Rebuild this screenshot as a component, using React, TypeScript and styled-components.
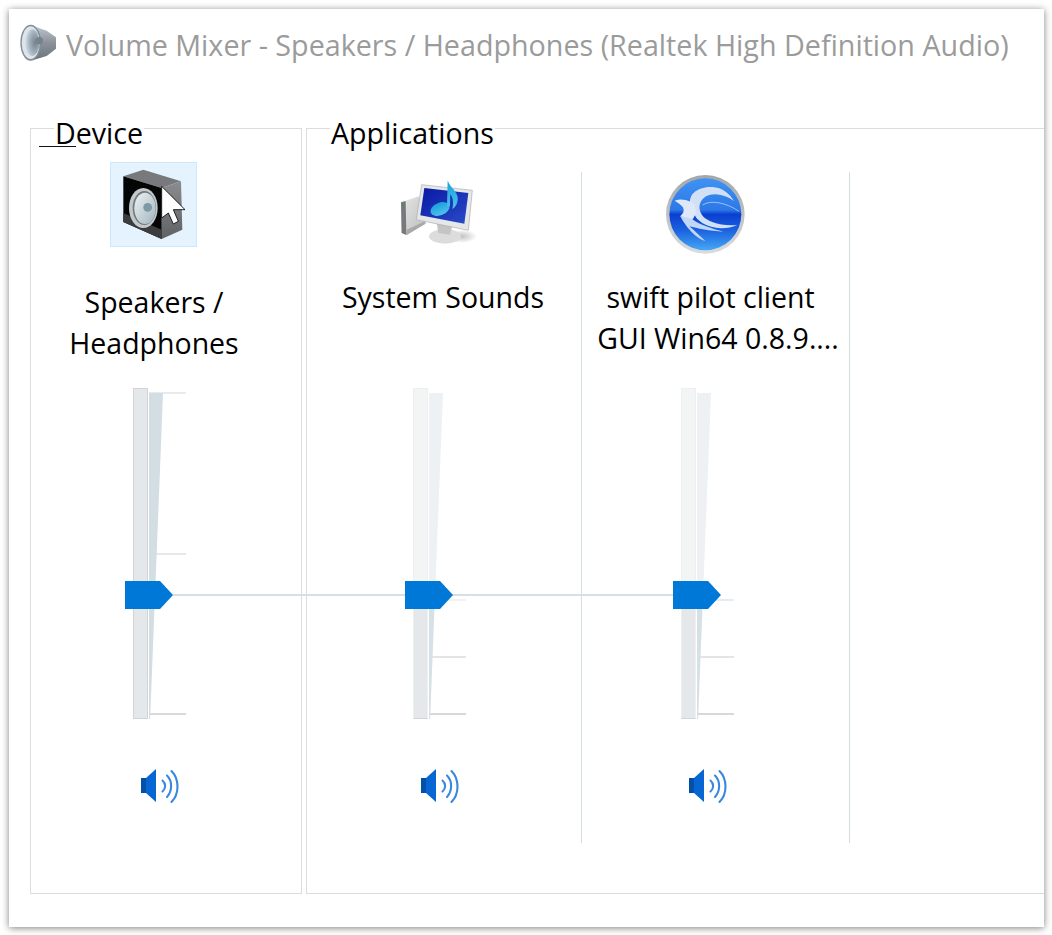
import React from 'react';
import styled, { createGlobalStyle } from 'styled-components';

const GlobalStyle = createGlobalStyle`
  html, body {
    margin: 0;
    padding: 0;
    background: #fff;
  }
  body {
    font-family: 'Open Sans', 'Liberation Sans', sans-serif;
  }
`;

function TitleSpeakerIcon() {
  return (
    <svg width="37" height="38" viewBox="60 72 111 114">
      <defs>
        <linearGradient id="ts-back" x1="0" y1="0" x2="0" y2="1">
          <stop offset="0" stopColor="#c0c5cb" />
          <stop offset="0.5" stopColor="#8b929a" />
          <stop offset="1" stopColor="#6d7379" />
        </linearGradient>
        <radialGradient id="ts-cone" cx="0.7" cy="0.5" r="0.75">
          <stop offset="0" stopColor="#76838e" />
          <stop offset="0.55" stopColor="#a5b3be" />
          <stop offset="1" stopColor="#dbe3e9" />
        </radialGradient>
      </defs>
      <polygon points="100,78 140,92 168,112 168,146 140,168 100,180" fill="url(#ts-back)" />
      <ellipse cx="92" cy="128" rx="31" ry="54" fill="#7f8d9b" />
      <ellipse cx="92" cy="128" rx="27" ry="49" fill="#dde5ea" />
      <ellipse cx="97" cy="128" rx="21" ry="40" fill="url(#ts-cone)" />
      <circle cx="118" cy="122" r="11" fill="#748390" />
    </svg>
  );
}

function DeviceIcon() {
  return (
    <svg width="85" height="83" viewBox="18 15 255 249">
      <defs>
        <linearGradient id="dv-side" x1="0" y1="0" x2="0" y2="1">
          <stop offset="0" stopColor="#8a8c90" />
          <stop offset="1" stopColor="#5f6165" />
        </linearGradient>
        <linearGradient id="dv-cone" x1="0" y1="0" x2="1" y2="1">
          <stop offset="0" stopColor="#eef2f3" />
          <stop offset="1" stopColor="#a3b5bf" />
        </linearGradient>
      </defs>
      <polygon points="55,55 115,35 228,70 170,90" fill="#77797d" />
      <polygon points="170,90 228,70 232,215 170,243" fill="url(#dv-side)" />
      <polygon points="55,55 170,90 170,243 55,192" fill="#050505" />
      <polygon points="55,165 170,215 170,243 55,192" fill="#3b3c3e" />
      <ellipse cx="115" cy="150" rx="43" ry="60" fill="#c3c8ca" />
      <ellipse cx="118" cy="150" rx="35" ry="51" fill="#6f7a80" />
      <ellipse cx="120" cy="151" rx="32" ry="47" fill="url(#dv-cone)" />
      <circle cx="128" cy="148" r="13" fill="#7f98a5" />
      <polygon
        points="170,85 240,155 205,155 220,190 205,198 190,165 170,180"
        fill="#fff"
        stroke="#000"
        strokeWidth="2.5"
      />
    </svg>
  );
}

function SystemSoundsIcon() {
  return (
    <svg width="78" height="68" viewBox="15 24 234 204">
      <defs>
        <linearGradient id="ss-screen" x1="0" y1="0" x2="1" y2="1">
          <stop offset="0" stopColor="#0a18a4" />
          <stop offset="1" stopColor="#2a4cc8" />
        </linearGradient>
        <linearGradient id="ss-note" x1="0" y1="0" x2="0" y2="1">
          <stop offset="0" stopColor="#1a9fdc" />
          <stop offset="1" stopColor="#4ec3ee" />
        </linearGradient>
        <linearGradient id="ss-tower" x1="0" y1="0" x2="1" y2="1">
          <stop offset="0" stopColor="#e6e6e6" />
          <stop offset="1" stopColor="#bdbdbd" />
        </linearGradient>
        <radialGradient id="ss-shadow">
          <stop offset="0" stopColor="#8e8e8e" stopOpacity="0.55" />
          <stop offset="1" stopColor="#8e8e8e" stopOpacity="0" />
        </radialGradient>
      </defs>
      <ellipse cx="200" cy="190" rx="46" ry="20" fill="url(#ss-shadow)" />
      <polygon points="18,88 72,70 92,150 35,186 20,180" fill="url(#ss-tower)" />
      <polygon points="18,88 32,84 34,186 20,180" fill="#77797c" />
      <rect x="23" y="92" width="5" height="10" fill="#4e8f4e" />
      <polygon points="35,170 90,145 92,152 35,186" fill="#a9a9a9" />
      <ellipse cx="150" cy="190" rx="48" ry="22" fill="#dcdcdc" />
      <polygon points="125,150 172,158 165,185 130,180" fill="#c4c4c4" />
      <polygon points="80,35 232,52 220,172 64,140" fill="#e5e7e9" stroke="#a9acaf" strokeWidth="2" />
      <polygon points="88,45 220,60 208,152 76,127" fill="url(#ss-screen)" />
      <ellipse cx="135" cy="108" rx="30" ry="19" transform="rotate(-22 135 108)" fill="url(#ss-note)" />
      <path d="M156 100 L158 22 C164 44 192 56 188 82 C186 96 180 104 172 108 C176 92 174 72 166 64 L165 100 Z" fill="url(#ss-note)" />
    </svg>
  );
}

function SwiftIcon() {
  return (
    <svg width="80" height="80" viewBox="18 18 240 240">
      <defs>
        <linearGradient id="sw-ring" x1="0" y1="0" x2="0" y2="1">
          <stop offset="0" stopColor="#a3a7ab" />
          <stop offset="1" stopColor="#dadcde" />
        </linearGradient>
        <linearGradient id="sw-disc" x1="0" y1="0" x2="0" y2="1">
          <stop offset="0" stopColor="#3f93f2" />
          <stop offset="0.44" stopColor="#2c78e8" />
          <stop offset="0.5" stopColor="#0a3fce" />
          <stop offset="0.72" stopColor="#1a62e0" />
          <stop offset="1" stopColor="#47a8f4" />
        </linearGradient>
      </defs>
      <circle cx="136" cy="136" r="118" fill="url(#sw-ring)" />
      <circle cx="136" cy="136" r="108" fill="url(#sw-disc)" />
      <path d="M90 100 C88 72 118 52 158 54 C185 56 208 72 222 96 C195 76 160 70 138 82 C118 94 112 118 126 138 C140 158 180 172 232 168 C190 186 140 178 112 150 C104 142 94 118 90 100 Z" fill="#d2e0f6" />
      <path d="M44 95 C60 88 80 92 96 100 C112 114 110 140 96 152 C84 158 70 148 62 140 C72 132 74 120 66 112 C60 104 52 100 44 95 Z" fill="#dfe8f8" />
      <path d="M60 140 C70 160 100 205 136 216 C118 200 104 185 88 172 C110 178 150 186 190 188 C160 180 120 168 96 150 Z" fill="#c2d6f5" />
      <path d="M128 108 C150 92 200 100 238 128" fill="none" stroke="#cfe0fa" strokeWidth="2" />
    </svg>
  );
}

function VolumeIcon() {
  return (
    <svg width="39" height="37" viewBox="0 0 39 37">
      <polygon points="0,10 5,10 5,25 0,25" fill="#0350a8" />
      <polygon points="5,10 15,1 15,34 5,25" fill="#0566d4" />
      <g fill="none" stroke="#3a88de" strokeWidth="2.1" strokeLinecap="round">
        <path d="M21.5 12.5 C25 15.5 25 20.5 21.5 23.5" />
        <path d="M26 7.5 C31.5 13 31.5 23 26 29" />
        <path d="M30.5 3 C38.5 11 38.5 26 30.5 34" />
      </g>
    </svg>
  );
}

const Page = styled.div`
  width: 1052px;
  height: 935px;
  padding: 9px 8px 8px 9px;
  box-sizing: border-box;
`;

const Window = styled.div`
  position: relative;
  width: 1035px;
  height: 918px;
  padding-left: 21px;
  box-sizing: border-box;
  overflow: hidden;
  background: #fff;
  box-shadow: 0 1px 7px rgba(0, 0, 0, 0.5);
`;

const TitleBar = styled.div`
  display: flex;
  align-items: flex-start;
  gap: 9px;
  height: 119px;
  padding-top: 15px;
  margin-left: -10px;
  box-sizing: border-box;
`;

const TitleText = styled.div`
  font-size: 28.7px;
  line-height: 38px;
  margin-top: 2px;
  color: #9b9b9b;
  white-space: nowrap;
`;

const Groups = styled.div`
  display: flex;
  gap: 4px;
`;

const Group = styled.div<{ $width: number }>`
  position: relative;
  flex: 0 0 ${(p) => p.$width}px;
  height: 766px;
  box-sizing: border-box;
  border: 1px solid #dcdcdc;
  display: flex;
  align-items: flex-start;
`;

const Legend = styled.div<{ $mark?: boolean }>`
  position: absolute;
  left: 23px;
  top: -14px;
  padding: 0 1px;
  background: #fff;
  color: #000;
  font-size: 28.6px;
  line-height: 36px;

  &::after {
    content: '';
    display: ${(p) => (p.$mark ? 'block' : 'none')};
    position: absolute;
    left: -15px;
    top: 31px;
    width: 37px;
    height: 1px;
    background: #111;
  }
`;

const Channel = styled.div<{ $width: number; $top: number; $pad: number; $divider?: boolean }>`
  flex: 0 0 ${(p) => p.$width}px;
  min-width: 0;
  margin-top: ${(p) => p.$top}px;
  padding-top: ${(p) => p.$pad}px;
  height: ${(p) => (p.$divider ? '671px' : 'auto')};
  box-sizing: border-box;
  border-right: ${(p) => (p.$divider ? '1px solid #d4dde2' : 'none')};
`;

const IconSlot = styled.div<{ $width: number; $height: number }>`
  width: ${(p) => p.$width}px;
  height: ${(p) => p.$height}px;
  display: flex;
  align-items: center;
  justify-content: center;
`;

const Tile = styled.div`
  width: 87px;
  height: 85px;
  box-sizing: border-box;
  display: flex;
  align-items: center;
  justify-content: center;
  background: #e5f3ff;
  border: 1px solid #cce8ff;
`;

const Label = styled.div<{ $width: number; $height: number; $gap: number }>`
  width: ${(p) => p.$width}px;
  height: ${(p) => p.$height}px;
  margin-top: ${(p) => p.$gap}px;
  font-size: 28.5px;
  line-height: 41px;
  color: #000;
  text-align: center;
  white-space: pre;
`;

const Slider = styled.div<{ $offset: number }>`
  position: relative;
  display: grid;
  grid-template-columns: 15px 37px;
  column-gap: 1px;
  width: 61px;
  height: 331px;
  padding-left: 8px;
  box-sizing: border-box;
  margin-left: ${(p) => p.$offset}px;
`;

const Track = styled.div<{ $faded?: boolean }>`
  box-sizing: border-box;
  background: ${(p) =>
    p.$faded ? 'linear-gradient(#f3f4f4 0 62%, #e5e8ea 62% 100%)' : '#e5e8ea'};
  border: 1px solid ${(p) => (p.$faded ? '#eeefef' : '#d2d5d6')};
  border-bottom-color: #d2d5d6;
`;

const Scale = styled.div<{ $start: number; $faded?: boolean }>`
  position: relative;
  display: flex;
  flex-direction: column;
  justify-content: space-between;
  padding: ${(p) => p.$start}px 0 4px;
  box-sizing: border-box;

  &::before {
    content: '';
    position: absolute;
    left: 0;
    top: 5px;
    width: 14px;
    height: 326px;
    background: ${(p) =>
      p.$faded ? 'linear-gradient(#edf1f4 0 62%, #d6e0e7 62% 100%)' : '#d2dde4'};
    clip-path: polygon(0 0, 100% 0, 8% 100%, 0 100%);
  }
`;

const Tick = styled.div<{ $tone: string }>`
  height: 2px;
  background: ${(p) => p.$tone};
`;

const Thumb = styled.div`
  position: absolute;
  z-index: 2;
  left: 0;
  top: 193px;
  width: 48px;
  height: 28px;
  background: #0078d7;
  clip-path: polygon(0 0, 73% 0, 100% 50%, 73% 100%, 0 100%);
`;

const LinkLine = styled.div`
  position: absolute;
  z-index: 1;
  left: 164px;
  top: 585px;
  width: 500px;
  height: 2px;
  background: #d5dfe5;
`;

const VolumeButton = styled.div<{ $offset: number }>`
  width: 39px;
  height: 37px;
  margin-top: 49px;
  margin-left: ${(p) => p.$offset + 16}px;
`;

const appChannels = [
  {
    width: 275,
    offset: 98,
    slot: 264,
    icon: <SystemSoundsIcon />,
    lines: ['System Sounds'],
    tones: ['#f0f2f3', '#e2e4e5', '#d6d9da'],
  },
  {
    width: 268,
    offset: 91,
    slot: 247,
    icon: <SwiftIcon />,
    // the first line keeps its trailing spaces, they push it left of centre
    lines: ['swift pilot client  ', 'GUI Win64 0.8.9....'],
    tones: ['#e8eaeb', '#e2e4e5', '#d6d9da'],
  },
];

export default function App() {
  return (
    <Page>
      <GlobalStyle />
      <Window>
        <TitleBar>
          <TitleSpeakerIcon />
          <TitleText>Volume Mixer - Speakers / Headphones (Realtek High Definition Audio)</TitleText>
        </TitleBar>
        <Groups>
          <Group $width={272}>
            <Legend $mark>Device</Legend>
            <Channel $width={270} $top={0} $pad={33}>
              <IconSlot $width={245} $height={85}>
                <Tile>
                  <DeviceIcon />
                </Tile>
              </IconSlot>
              <Label $width={246} $height={106} $gap={35}>
                Speakers /
                <br />
                Headphones
              </Label>
              <Slider $offset={94}>
                <Track />
                <Scale $start={4}>
                  <Tick $tone="#e8eaeb" />
                  <Tick $tone="#e6e8e9" />
                  <Tick $tone="#d8dadb" />
                </Scale>
                <Thumb />
              </Slider>
              <VolumeButton $offset={94}>
                <VolumeIcon />
              </VolumeButton>
            </Channel>
          </Group>
          <Group $width={760}>
            <Legend>Applications</Legend>
            {appChannels.map((c) => (
              <Channel key={c.offset} $width={c.width} $top={43} $pad={0} $divider>
                <IconSlot $width={c.slot} $height={86}>
                  {c.icon}
                </IconSlot>
                <Label $width={272} $height={111} $gap={19}>
                  {c.lines.map((line) => (
                    <div key={line}>{line}</div>
                  ))}
                </Label>
                <Slider $offset={c.offset}>
                  <Track $faded />
                  <Scale $start={211} $faded>
                    {c.tones.map((tone, i) => (
                      <Tick key={i} $tone={tone} />
                    ))}
                  </Scale>
                  <Thumb />
                </Slider>
                <VolumeButton $offset={c.offset}>
                  <VolumeIcon />
                </VolumeButton>
              </Channel>
            ))}
          </Group>
        </Groups>
        <LinkLine />
      </Window>
    </Page>
  );
}
